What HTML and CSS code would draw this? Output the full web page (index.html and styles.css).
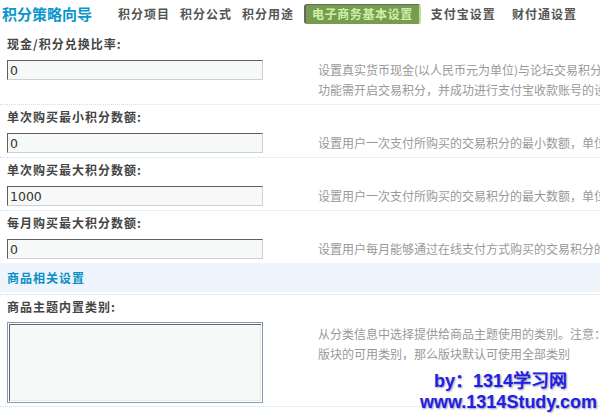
FILE: index.html
```html
<!DOCTYPE html>
<html lang="zh-CN">
<head>
<meta charset="utf-8">
<title>积分策略向导</title>
<link rel="stylesheet" href="styles.css">
</head>
<body>
<div class="page">
  <div class="header">
    <div class="title">积分策略向导</div>
    <div class="nav">
      <span class="nav-item">积分项目</span>
      <span class="nav-item">积分公式</span>
      <span class="nav-item">积分用途</span>
      <span class="nav-item active">电子商务基本设置</span>
      <span class="nav-item">支付宝设置</span>
      <span class="nav-item last">财付通设置</span>
    </div>
  </div>

  <div class="label-row">现金/积分兑换比率:</div>
  <div class="field-row">
    <div class="field-cell"><input class="text-input" type="text" value="0"></div>
    <div class="desc">设置真实货币现金(以人民币元为单位)与论坛交易积分的兑换比率，例如设置为 10，则 1 元可购买 10 积分<br>功能需开启交易积分，并成功进行支付宝收款账号的设置后方可使用</div>
  </div>

  <div class="label-row">单次购买最小积分数额:</div>
  <div class="field-row">
    <div class="field-cell"><input class="text-input" type="text" value="0"></div>
    <div class="desc">设置用户一次支付所购买的交易积分的最小数额，单位为交易积分</div>
  </div>

  <div class="label-row">单次购买最大积分数额:</div>
  <div class="field-row">
    <div class="field-cell"><input class="text-input" type="text" value="1000"></div>
    <div class="desc">设置用户一次支付所购买的交易积分的最大数额，单位为交易积分</div>
  </div>

  <div class="label-row">每月购买最大积分数额:</div>
  <div class="field-row plain">
    <div class="field-cell"><input class="text-input" type="text" value="0"></div>
    <div class="desc">设置用户每月能够通过在线支付方式购买的交易积分的最大数额</div>
  </div>

  <div class="section">
    <div class="section-band">商品相关设置</div>
  </div>

  <div class="label-row">商品主题内置类别:</div>
  <div class="field-row tall">
    <div class="field-cell"><textarea class="text-area"></textarea></div>
    <div class="desc desc-top">从分类信息中选择提供给商品主题使用的类别。注意：如果没有设置<br>版块的可用类别，那么版块默认可使用全部类别</div>
  </div>

  <div class="watermark">
    <div class="wm-line wm-by">by：1314学习网</div>
    <div class="wm-line">www.1314Study.com</div>
  </div>
</div>
</body>
</html>
```

FILE: styles.css
```css
html, body {
  margin: 0;
  padding: 0;
  background: #ffffff;
}
body {
  width: 600px;
  height: 413px;
  overflow: hidden;
  font-family: "Noto Sans CJK SC", "Noto Sans", sans-serif;
  font-size: 12px;
  color: #444;
}
.page {
  position: relative;
  width: 600px;
  height: 413px;
  overflow: hidden;
}
.header {
  display: flex;
  align-items: center;
  height: 32px;
  box-sizing: border-box;
  padding: 4px 0 8px 2px;
}
.title {
  flex: 0 0 116px;
  font-size: 15px;
  font-weight: bold;
  color: #0a96cc;
  line-height: 18px;
  white-space: nowrap;
}
.nav {
  display: flex;
  align-items: center;
  gap: 10px;
  white-space: nowrap;
}
.nav-item {
  font-weight: bold;
  font-size: 12px;
  letter-spacing: 1px;
  color: #555;
  line-height: 20px;
}
.nav-item.active {
  box-sizing: border-box;
  height: 20px;
  line-height: 17px;
  padding: 0 6px 0 6px;
  background: #779c4f;
  color: #cdf0a8;
  border-style: solid;
  border-width: 1px 2px 1px 2px;
  border-color: #666 #b9e28d #779c4f #666;
  border-radius: 3px;
  letter-spacing: 0.6px;
}
.nav-item.last {
  margin-left: 6px;
}
.label-row {
  height: 24px;
  line-height: 24px;
  padding-left: 7px;
  font-weight: bold;
  letter-spacing: 1px;
  color: #444;
  white-space: nowrap;
}
.field-row {
  display: flex;
  align-items: flex-start;
  padding: 4px 0 4px 0;
  border-bottom: 1px dotted #c9e1f0;
}
.field-row.plain {
  border-bottom: none;
}
.field-row.tall {
  padding: 3px 0 3px 0;
}
.field-cell {
  flex: 0 0 311px;
  padding-left: 7px;
}
.text-input {
  display: block;
  box-sizing: border-box;
  width: 256px;
  height: 20px;
  margin: 0;
  padding: 0 2px;
  border-style: solid;
  border-width: 1px;
  border-color: #5f5f5f #cfcfcf #cfcfcf #5f5f5f;
  background: #f7f9f8;
  font-family: "DejaVu Sans", Verdana, sans-serif;
  font-size: 12.5px;
  color: #333;
  outline: none;
}
.text-area {
  display: block;
  box-sizing: border-box;
  width: 256px;
  height: 81px;
  margin: 0;
  padding: 0;
  border: 1px solid #7f9db9;
  background: #f7f9f8;
  box-shadow: inset 1px 1px 0 #ffffff, inset -1px -1px 0 #ffffff, inset 2px 2px 0 #676767, inset -2px -2px 0 #ece9d8;
  resize: none;
  outline: none;
}
.desc {
  flex: 0 0 auto;
  white-space: nowrap;
  line-height: 20px;
  color: #999;
}
.desc-top {
  margin-top: 2px;
}
.section {
  padding-bottom: 2px;
  border-bottom: 1px dotted #c9e1f0;
}
.section-band {
  height: 29px;
  line-height: 29px;
  padding-left: 7px;
  background: #eef5fc;
  color: #0b8fc6;
  font-weight: bold;
  letter-spacing: 1px;
}
.watermark {
  position: absolute;
  left: 420px;
  top: 371px;
  width: 180px;
  font-family: "Liberation Sans", Arial, sans-serif;
  font-weight: bold;
  font-size: 18px;
  line-height: 21px;
  color: #1e22e0;
  text-shadow: 1px 1px 2px #9a9ab8;
  white-space: nowrap;
}
.wm-by {
  padding-left: 14px;
}
```
